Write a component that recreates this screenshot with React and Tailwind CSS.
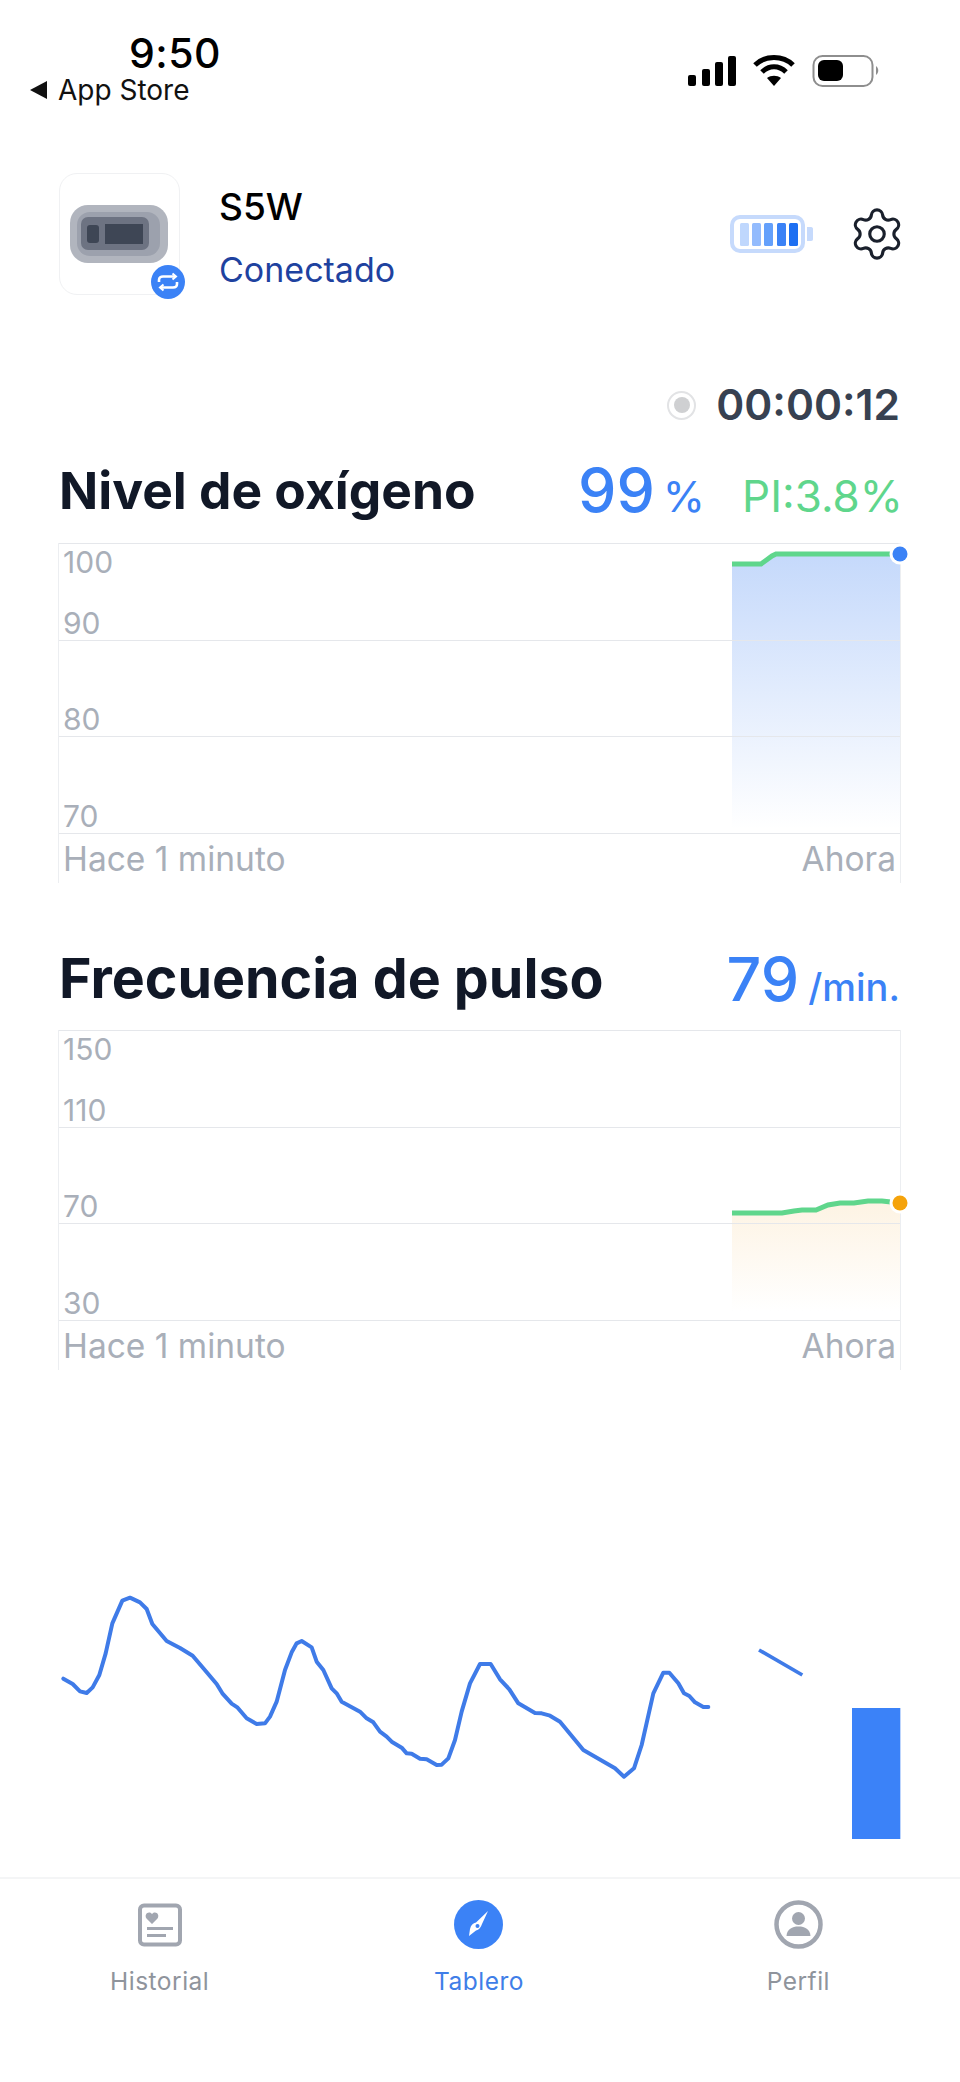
import { Settings } from "lucide-react";

const FONT = "font-['Inter','Liberation_Sans',sans-serif]";

// Pleth trace samples, in thirds of a pixel inside the 880x300 wave panel.
const PLETH = [
  [70,356],[98,372],[120,394],[140,399],[158,382],[178,345],[197,280],[217,190],[247,122],[270,113],[300,127],[320,147],[337,192],[380,243],[420,264],[458,287],[490,325],[530,372],[547,400],[575,431],[593,443],[620,475],[650,492],[675,490],[690,470],[710,425],[735,330],[755,277],[770,250],[785,243],[815,262],[830,305],[850,330],[875,385],[890,400],[905,425],[960,455],[980,475],[1000,487],[1020,515],[1040,530],[1055,545],[1085,563],[1100,580],[1115,581],[1140,596],[1160,598],[1190,615],[1205,614],[1225,595],[1245,540],[1265,455],[1290,370],[1320,312],[1352,312],[1380,358],[1408,388],[1435,430],[1485,459],[1505,460],[1530,467],[1560,485],[1630,570],[1725,625],[1752,650],[1782,625],[1805,555],[1840,400],[1870,338],[1888,338],[1915,370],[1932,400],[1948,408],[1965,427],[1990,441],[2005,441],
];

const plethPath = "M" + PLETH.map((p) => p.join(" ")).join(" L");

function StatusIcons() {
  return (
    <svg width="192" height="32" viewBox="0 0 192 32" className="block">
      <rect x="0" y="20" width="8" height="11" rx="2" fill="#000" />
      <rect x="14" y="14" width="8" height="17" rx="2" fill="#000" />
      <rect x="27" y="7" width="8" height="24" rx="2" fill="#000" />
      <rect x="40" y="1" width="8" height="30" rx="2" fill="#000" />
      <path d="M67 10C77 0 95 0 105 10" fill="none" stroke="#000" strokeWidth="5" />
      <path d="M74 17C81 10 91 10 98 17" fill="none" stroke="#000" strokeWidth="5" />
      <path d="M86 31L79 23C83 20 89 20 93 23Z" fill="#000" />
      <rect x="125.5" y="1" width="59" height="30" rx="9" fill="#fff" stroke="#8e8e8e" strokeWidth="2" />
      <rect x="130" y="5" width="25" height="21" rx="6" fill="#000" />
      <path d="M188 11C191 13 191 18 188 20Z" fill="#8e8e8e" />
    </svg>
  );
}

function DeviceCard() {
  return (
    <div className="relative w-[121px] h-[122px] rounded-[18px] border border-[#f0f1f3] flex items-center justify-center shrink-0">
      <svg width="100" height="60" viewBox="0 0 100 60" className="mt-[2px]">
        <rect x="0" y="0" width="98" height="58" rx="18" fill="#b1b5be" />
        <rect x="7" y="7" width="83" height="44" rx="13" fill="#9ca1ad" />
        <rect x="11" y="12" width="68" height="33" rx="7" fill="#6d7382" />
        <rect x="17" y="20" width="12" height="18" rx="3" fill="#3e4655" />
        <rect x="35" y="19" width="38" height="20" fill="#3e4655" />
      </svg>
      <div className="absolute right-[-6px] bottom-[-5px] w-[34px] h-[34px] rounded-full bg-[#3b82f6] flex items-center justify-center">
        <svg width="24" height="20" viewBox="0 0 24 20" fill="none" stroke="#fff" strokeWidth="2.6">
          <path d="M3 10V8C3 5.5 5 4.5 7 4.5H19" />
          <path d="M21 10V12C21 14.5 19 15.5 17 15.5H5" />
          <path d="M16.5 1.5L20 4.5L16.5 7.5" strokeWidth="2" />
          <path d="M7.5 12.5L4 15.5L7.5 18.5" strokeWidth="2" />
        </svg>
      </div>
    </div>
  );
}

function DeviceBattery() {
  return (
    <svg width="84" height="38" viewBox="0 0 84 38" className="block">
      <rect x="2" y="2" width="71" height="34" rx="8" fill="#fff" stroke="#c6dafc" strokeWidth="4" />
      <path d="M77 12H81C82.5 12 83 13 83 14V24C83 25 82.5 26 81 26H77Z" fill="#c6dafc" />
      <rect x="10" y="8" width="9" height="23" rx="1.5" fill="#bfd7fd" />
      <rect x="22" y="8" width="9" height="23" rx="1.5" fill="#93bbfd" />
      <rect x="34" y="8" width="9" height="23" rx="1.5" fill="#64a0fb" />
      <rect x="47" y="8" width="9" height="23" rx="1.5" fill="#3b82f6" />
      <rect x="59" y="8" width="9" height="23" rx="1.5" fill="#1d6ff2" />
    </svg>
  );
}

function Plot({ labels, footerLeft, children }) {
  return (
    <div className="border-x border-[#eceef1]">
      <div className="relative border-t border-[#e5e7eb] h-[291px] grid grid-rows-3">
        {children}
        {[0, 1, 2].map((i) => (
          <div
            key={i}
            className="relative border-b border-[#e5e7eb] flex flex-col justify-end pl-[4px] text-[30px] leading-[34px] text-[#a9afb9]"
          >
            {i === 0 ? <span className="absolute left-[4px] top-[1px]">{labels[0]}</span> : null}
            <span>{labels[i + 1]}</span>
          </div>
        ))}
      </div>
      <div className="h-[49px] flex justify-between items-center px-[4px] text-[33.5px] leading-[40px] text-[#a9afb9]">
        <span>{footerLeft}</span>
        <span>Ahora</span>
      </div>
    </div>
  );
}

function Trace({ id, line, dot, fill, floorY }) {
  const pts = line.map((p) => p.join(" ")).join(" L");
  const [ex, ey] = line[line.length - 1];
  return (
    <svg width="186" height="291" viewBox="0 0 186 291" className="absolute left-[673px] top-0 overflow-visible">
      <defs>
        <linearGradient id={id} x1="0" y1="0" x2="0" y2="1">
          <stop offset="0" stopColor={fill} stopOpacity="1" />
          <stop offset="1" stopColor={fill} stopOpacity="0" />
        </linearGradient>
      </defs>
      <path d={`M${pts} L168 ${floorY} L0 ${floorY}Z`} fill={`url(#${id})`} />
      <path d={`M${pts}`} fill="none" stroke="#5fd68c" strokeWidth="5" />
      <circle cx={ex} cy={ey} r="10.5" fill="#fff" />
      <circle cx={ex} cy={ey} r="7.5" fill={dot} />
    </svg>
  );
}

function HistoryIcon() {
  return (
    <svg width="44" height="44" viewBox="0 0 44 44" fill="none">
      <rect x="2" y="2.5" width="40" height="39" rx="4" stroke="#a1a6b0" strokeWidth="4" />
      <path d="M14 21L8.5 15.5C6.5 12.5 8.5 9.5 11 9.5C12.5 9.5 13.5 10.2 14 11.2C14.5 10.2 15.5 9.5 17 9.5C19.5 9.5 21.5 12.5 19.5 15.5Z" fill="#a1a6b0" />
      <rect x="9" y="24" width="26" height="3" fill="#a1a6b0" />
      <rect x="9" y="31" width="19" height="3" fill="#a1a6b0" />
    </svg>
  );
}

function CompassIcon() {
  return (
    <svg width="49" height="49" viewBox="0 0 49 49">
      <circle cx="24.5" cy="24.5" r="24.5" fill="#3b82f6" />
      <path d="M34 11L28 24C27 27 25 30 22 30.5L15 36L16 29C17 25 19 23 22 22.5Z" fill="#fff" />
      <circle cx="23.5" cy="26" r="2" fill="#3b82f6" />
    </svg>
  );
}

function ProfileIcon() {
  return (
    <svg width="49" height="49" viewBox="0 0 49 49" fill="none">
      <circle cx="24.5" cy="24.5" r="22" stroke="#a1a6b0" strokeWidth="4.5" />
      <circle cx="24.5" cy="18.5" r="6.5" fill="#a1a6b0" />
      <path d="M12.5 36C13 29 18 26.5 24.5 26.5C31 26.5 36 29 36.5 36Z" fill="#a1a6b0" />
    </svg>
  );
}

function Tab({ icon, label, active }) {
  return (
    <div className="flex flex-col items-center">
      <div className="h-[49px] flex items-center justify-center">{icon}</div>
      <span className={`mt-[15px] text-[24.5px] leading-[34px] tracking-[0.5px] ${active ? "text-[#3f7ee8]" : "text-[#8f949c]"}`}>{label}</span>
    </div>
  );
}

export default function App() {
  return (
    <div className={`${FONT} w-[960px] h-[2082px] bg-white flex flex-col overflow-hidden`}>
      {/* Phone status bar */}
      <div className="h-[173px] flex justify-between items-start shrink-0">
        <div className="pt-[30px] pl-[30px]">
          <div className="pl-[99px] text-[41px] leading-[46px] font-medium text-black tracking-[0.5px]">9:50</div>
          <div className="mt-[-2px] flex items-center gap-[11px] text-[28px] leading-[32px] text-[#111]">
            <svg width="17" height="18" viewBox="0 0 17 18"><path d="M0 9L17 0V18Z" fill="#111" /></svg>
            <span>App Store</span>
          </div>
        </div>
        <div className="pt-[55px] pr-[80px]"><StatusIcons /></div>
      </div>

      {/* Connected device */}
      <div className="h-[122px] pl-[59px] pr-[58px] flex items-center shrink-0">
        <DeviceCard />
        <div className="ml-[39px] flex-1">
          <div className="mt-[8px] text-[37px] leading-[40px] font-medium text-black">S5W</div>
          <div className="mt-[23px] text-[34px] leading-[40px] text-[#1e429f]">Conectado</div>
        </div>
        <DeviceBattery />
        <Settings size={58} strokeWidth={1.3} className="ml-[34px] mr-[-4px] text-[#1a202c]" />
      </div>

      {/* Session timer */}
      <div className="mt-[85px] h-[50px] pr-[60px] flex items-center justify-end gap-[20px] shrink-0">
        <div className="w-[29px] h-[29px] rounded-full border-2 border-[#e2e3e5] flex items-center justify-center">
          <div className="w-[16px] h-[16px] rounded-full bg-[#cfd0d2]" />
        </div>
        <span className="text-[42.5px] leading-[50px] font-semibold text-[#374151]">00:00:12</span>
      </div>

      {/* Oxygen level */}
      <div className="mt-[25px] h-[70px] pl-[59px] pr-[57px] flex items-center shrink-0">
        <h2 className="flex-1 text-[51.5px] leading-[70px] font-bold text-[#111827]">Nivel de oxígeno</h2>
        <div className="mt-[3px] flex items-baseline">
          <span className="text-[61px] leading-[70px] font-medium text-[#3b82f6]">99</span>
          <span className="ml-[8px] text-[43px] text-[#3b82f6]">%</span>
          <span className="ml-[37px] text-[44px] text-[#5fd68c]">PI:3.8%</span>
        </div>
      </div>
      <div className="mt-[18px] pl-[58px] pr-[59px] shrink-0">
        <Plot labels={["100", "90", "80", "70"]} footerLeft="Hace 1 minuto">
          <Trace id="spo2Fill" dot="#3b82f6" fill="#c5d9fb" floorY="285" line={[[0,20],[29,20],[40,12],[44,10],[168,10]]} />
        </Plot>
      </div>

      {/* Pulse rate */}
      <div className="mt-[60px] h-[70px] pl-[59px] pr-[60px] flex items-center shrink-0">
        <h2 className="flex-1 text-[55.5px] leading-[70px] font-bold text-[#111827]">Frecuencia de pulso</h2>
        <div className="mt-[3px] flex items-baseline">
          <span className="text-[61px] leading-[70px] font-medium text-[#3b82f6]">79</span>
          <span className="ml-[9px] text-[38px] font-medium text-[#3b82f6]">/min.</span>
        </div>
      </div>
      <div className="mt-[17px] pl-[58px] pr-[59px] shrink-0">
        <Plot labels={["150", "110", "70", "30"]} footerLeft="Hace 1 minuto">
          <Trace id="prFill" dot="#f5a30b" fill="#fdf3e3" floorY="280" line={[[0,182],[50,182],[62,180],[70,179],[84,179],[96,174],[108,172],[122,172],[136,170],[150,170],[168,172]]} />
        </Plot>
      </div>

      {/* Live pleth wave with signal bar */}
      <div className="mt-[190px] pl-[40px] h-[300px] shrink-0">
        <svg width="880" height="300" viewBox="0 0 2640 900" className="block">
          <path d={plethPath} fill="none" stroke="#3f7be8" strokeWidth="12" strokeLinejoin="round" strokeLinecap="round" />
          <path d="M2157 270L2287 345" fill="none" stroke="#3f7be8" strokeWidth="11" />
          <rect x="2436" y="444" width="145" height="393" fill="#3b82f8" />
        </svg>
      </div>

      {/* Tab bar */}
      <div className="mt-[17px] border-t-2 border-[#f4f5f6] pt-[21px] pr-[2px] grid grid-cols-3 shrink-0">
        <Tab icon={<HistoryIcon />} label="Historial" />
        <Tab icon={<CompassIcon />} label="Tablero" active />
        <Tab icon={<ProfileIcon />} label="Perfil" />
      </div>
    </div>
  );
}
